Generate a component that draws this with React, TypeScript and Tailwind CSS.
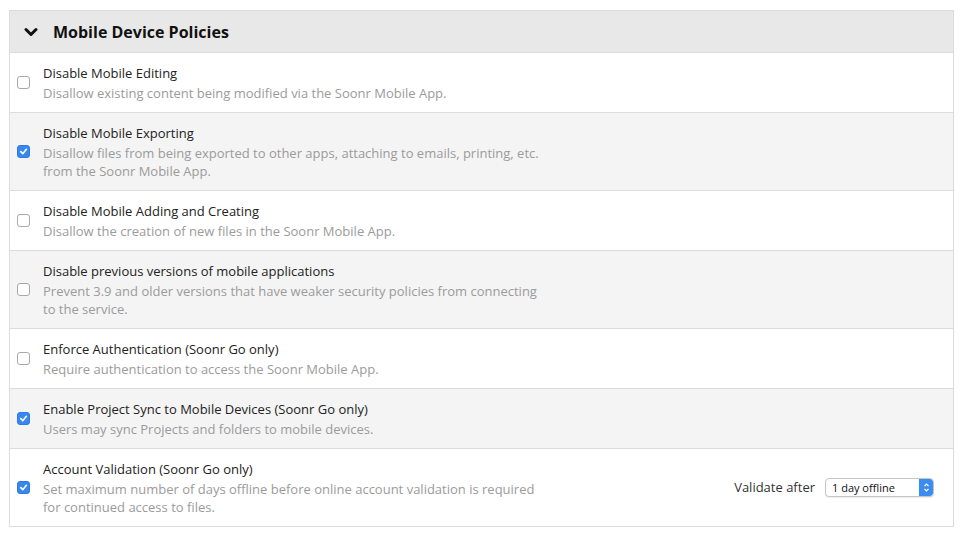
import { useState } from 'react';

const policies = [
  {
    title: 'Disable Mobile Editing',
    desc: ['Disallow existing content being modified via the Soonr Mobile App.'],
    checked: false,
  },
  {
    title: 'Disable Mobile Exporting',
    desc: [
      'Disallow files from being exported to other apps, attaching to emails, printing, etc.',
      'from the Soonr Mobile App.',
    ],
    checked: true,
  },
  {
    title: 'Disable Mobile Adding and Creating',
    desc: ['Disallow the creation of new files in the Soonr Mobile App.'],
    checked: false,
  },
  {
    title: 'Disable previous versions of mobile applications',
    desc: [
      'Prevent 3.9 and older versions that have weaker security policies from connecting',
      'to the service.',
    ],
    checked: false,
  },
  {
    title: 'Enforce Authentication (Soonr Go only)',
    desc: ['Require authentication to access the Soonr Mobile App.'],
    checked: false,
  },
  {
    title: 'Enable Project Sync to Mobile Devices (Soonr Go only)',
    desc: ['Users may sync Projects and folders to mobile devices.'],
    checked: true,
  },
  {
    title: 'Account Validation (Soonr Go only)',
    desc: [
      'Set maximum number of days offline before online account validation is required',
      'for continued access to files.',
    ],
    checked: true,
    validate: true,
  },
];

function Checkbox({ checked, onToggle }: { checked: boolean; onToggle: () => void }) {
  return (
    <button
      onClick={onToggle}
      className={`w-[13px] h-[13px] rounded-[3px] flex items-center justify-center shrink-0 ${
        checked ? 'bg-[#3688f0] border border-[#2f7be0]' : 'bg-white border border-[#a8a8a8]'
      }`}
    >
      {checked && (
        <svg width="9" height="9" viewBox="0 0 10 10">
          <path d="M2 5.2 L4.2 7.4 L8.2 2.6" fill="none" stroke="white" strokeWidth="1.8" strokeLinecap="round" strokeLinejoin="round" />
        </svg>
      )}
    </button>
  );
}

export default function App() {
  const [state, setState] = useState(policies.map((p) => p.checked));

  return (
    <div className="w-[968px] h-[544px] bg-white pt-[10px] pl-[9px]" style={{ fontFamily: '"Open Sans", sans-serif' }}>
      <div className="w-[945px] border border-[#dcdcdc]">
        {/* Header */}
        <div className="h-[42px] bg-[#e8e8e8] flex items-center pl-[14px] border-b border-[#dcdcdc]">
          <svg width="14" height="10" viewBox="0 0 14 10" className="mr-[15px]">
            <path d="M2 2.5 L7 7.5 L12 2.5" fill="none" stroke="#111" strokeWidth="3" strokeLinecap="round" strokeLinejoin="round" />
          </svg>
          <span className="text-[16px] font-bold text-[#111]">Mobile Device Policies</span>
        </div>

        {policies.map((p, i) => (
          <div
            key={i}
            className={`flex items-center pl-[7px] pr-[19px] pt-[10px] pb-[10px] ${
              i > 0 ? 'border-t border-[#dcdcdc]' : ''
            } ${i % 2 === 1 ? 'bg-[#f4f4f4]' : 'bg-white'}`}
          >
            <Checkbox
              checked={state[i]}
              onToggle={() => setState((s) => s.map((v, j) => (j === i ? !v : v)))}
            />
            <div className="ml-[13px] flex-1">
              <div className="text-[13px] leading-[21px] text-[#222]">{p.title}</div>
              <div className="text-[13px] leading-[18px] text-[#9b9b9b]">
                {p.desc.map((line, k) => (
                  <div key={k}>{line}</div>
                ))}
              </div>
            </div>
            {p.validate && (
              <div className="flex items-center">
                <span className="text-[13px] text-[#333] mr-[10px]">Validate after</span>
                <div className="w-[109px] h-[19px] flex items-center border border-[#c6c6c6] rounded-[4px] bg-white shadow-[0_1px_1px_rgba(0,0,0,0.08)] overflow-hidden">
                  <span className="flex-1 text-[11px] pl-[6px] text-[#111] leading-none">1 day offline</span>
                  <span className="w-[14px] h-full bg-[#3b8cf0] flex items-center justify-center rounded-r-[3px]">
                    <svg width="7" height="11" viewBox="0 0 7 11">
                      <path d="M1.5 4 L3.5 2 L5.5 4 M1.5 7 L3.5 9 L5.5 7" fill="none" stroke="white" strokeWidth="1.2" />
                    </svg>
                  </span>
                </div>
              </div>
            )}
          </div>
        ))}
      </div>
    </div>
  );
}
